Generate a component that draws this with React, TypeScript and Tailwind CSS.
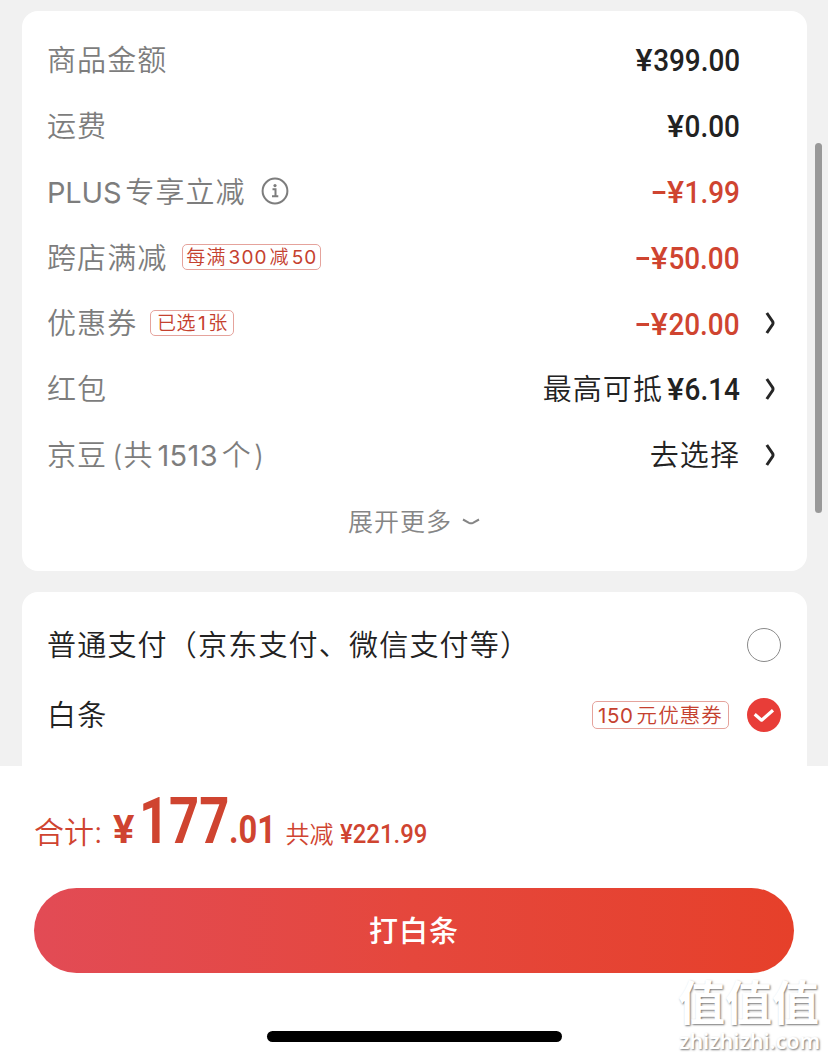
import type { ReactNode } from "react";

const CJK = "font-['Inter','Noto_Sans_CJK_SC',sans-serif]";

function Price({ amount, minus = false }: { amount: string; minus?: boolean }) {
  return (
    <span
      className={`flex origin-right scale-x-[0.9] items-baseline font-['Roboto',sans-serif] text-[31px] font-medium leading-none ${minus ? "text-[#cf4430]" : ""}`}
    >
      {minus && <span className="mr-[2px] h-[3px] w-[14px] self-center bg-[#cf4430]" />}
      <span className="mr-[3px] inline-block origin-left scale-x-[1.15]">¥</span>
      <span>{amount}</span>
    </span>
  );
}

function Chevron() {
  return (
    <svg viewBox="0 0 10 22" className="h-[22px] w-[10px]" fill="none" stroke="#262626" strokeWidth="3">
      <path d="M1.8 1 L7.6 9.5 Q8.4 11 7.6 12.5 L1.8 21" />
    </svg>
  );
}

function InfoIcon() {
  return (
    <svg viewBox="0 0 28 28" className="ml-[15px] size-7" fill="none" stroke="#7d7d7d" strokeWidth="2">
      <circle cx="14" cy="14" r="12.4" />
      <path d="M11.5 12.2h3v7M11 19.3h6.3" />
      <circle cx="14" cy="8.6" r="1.6" fill="#7d7d7d" stroke="none" />
    </svg>
  );
}

function Tag({ children, className }: { children: ReactNode; className: string }) {
  return (
    <span
      className={`flex items-center justify-center whitespace-nowrap rounded-[5px] border border-[#e5a39c] leading-none text-[#c5412f] ${className}`}
    >
      {children}
    </span>
  );
}

function Row({
  label,
  extra,
  value,
  arrow = false,
}: {
  label: ReactNode;
  extra?: ReactNode;
  value: ReactNode;
  arrow?: boolean;
}) {
  return (
    <div className="flex h-[65.8px] items-center">
      <span className="whitespace-nowrap pt-[2px] text-[29px] tracking-[1.1px] text-[#7d7d7d]">{label}</span>
      {extra}
      <span className="ml-auto flex items-center whitespace-nowrap pt-[2px] text-[#222]">{value}</span>
      <span className="flex w-[67px] justify-start pl-[25px]">{arrow && <Chevron />}</span>
    </div>
  );
}

export default function App() {
  return (
    <div className={`relative flex h-[1059px] w-[828px] flex-col overflow-hidden bg-[#f1f1f1] font-[350] ${CJK}`}>
      <main className="flex h-[766px] shrink-0 flex-col gap-[21px] overflow-hidden px-[22px] pt-[11px]">
        <section className="h-[560px] w-[785px] shrink-0 rounded-[16px] bg-white pl-[25px] pt-[16px]">
          <Row label="商品金额" value={<Price amount="399.00" />} />
          <Row label="运费" value={<Price amount="0.00" />} />
          <Row
            label={<><span className="mr-[4px] font-normal tracking-[-0.2px]">PLUS</span>专享立减</>}
            extra={<InfoIcon />}
            value={<Price minus amount="1.99" />}
          />
          <Row
            label="跨店满减"
            extra={<Tag className="ml-[15px] h-[26px] w-[139px] text-[19px] tracking-[1.1px]">每满<span className="mx-[2px] font-normal">300</span>减<span className="ml-[2px] font-normal">50</span></Tag>}
            value={<Price minus amount="50.00" />}
          />
          <Row
            label="优惠券"
            extra={<Tag className="ml-[13px] h-[26px] w-[84px] text-[19px] tracking-[0.5px]">已选<span className="mx-[2px] font-normal">1</span>张</Tag>}
            value={<Price minus amount="20.00" />}
            arrow
          />
          <Row
            label="红包"
            value={<><span className="-mr-[4px] text-[29px] tracking-[1.1px]">最高可抵</span><Price amount="6.14" /></>}
            arrow
          />
          <Row
            label={<>京豆<span className="ml-[5px]">(</span>共<span className="mx-[4px] font-normal tracking-[0.3px]">1513</span>个<span className="ml-[2px]">)</span></>}
            value={<span className="text-[29px] tracking-[1.1px]">去选择</span>}
            arrow
          />
          <div className="flex h-[66px] items-center pl-[301px] text-[25px] tracking-[1px] text-[#858585]">
            <span className="pt-[4px]">展开更多</span>
            <svg viewBox="0 0 18 8" className="ml-[10px] mt-[2px] h-2 w-[18px]" fill="none" stroke="#858585" strokeWidth="2">
              <path d="M1 1.5 L7 4.8 Q9 5.8 11 4.8 L17 1.5" />
            </svg>
          </div>
        </section>

        <section className="h-[200px] w-[785px] shrink-0 rounded-t-[16px] bg-white pl-[25px] pr-[26px] pt-[18px] text-[29px] tracking-[1.2px] text-[#222]">
          <div className="flex h-[70px] items-center justify-between">
            <span className="whitespace-nowrap pt-[2px]">普通支付（京东支付、微信支付等）</span>
            <span className="size-[34px] rounded-full border-[1.5px] border-[#8a8a8a]" />
          </div>
          <div className="flex h-[70px] items-center">
            <span className="pt-[2px]">白条</span>
            <Tag className="ml-auto h-[28px] w-[137px] border-[#c98078] pt-[2px] text-[20.5px] tracking-[1.1px]"><span className="mr-[3px] font-normal tracking-[0.6px]">150</span>元优惠券</Tag>
            <svg viewBox="0 0 34 34" className="ml-[18px] size-[34px]">
              <circle cx="17" cy="17" r="17" fill="#e83d38" />
              <path d="M7.7 16.2 L14.6 22.2 L26 12.2" fill="none" stroke="white" strokeWidth="3.2" strokeLinejoin="round" />
            </svg>
          </div>
        </section>
      </main>

      <footer className="flex flex-1 flex-col bg-white">
        <div className="flex h-[122px] items-baseline whitespace-nowrap pl-[34px] pt-[8px] text-[#cf4430]">
          <span className="text-[30px]">合计:</span>
          <span className="ml-[11px] flex w-[161px] items-baseline font-['Roboto',sans-serif] text-[38px] font-bold">
            <span className="inline-block w-[26px] shrink-0 origin-left scale-x-[1.05]">¥</span>
            <span className="inline-block w-[90px] shrink-0 origin-left scale-x-[0.82] text-[64px]">177</span>
            <span className="inline-block shrink-0 origin-left scale-x-[0.86]">.01</span>
          </span>
          <span className="ml-[11px] text-[24px]">共减</span>
          <span className="ml-[7px] inline-block origin-left scale-x-[0.92] font-['Roboto',sans-serif] text-[26px] font-medium">¥221.99</span>
        </div>
        <button className="ml-[34px] h-[85px] w-[760px] rounded-full bg-linear-to-r from-[#e24b55] via-[#e5473c] to-[#e6402a] pt-[2px] text-[29px] font-medium tracking-[1px] text-white">
          打白条
        </button>
        <div className="ml-[267px] mt-[58px] h-[11px] w-[295px] rounded-full bg-black" />
      </footer>

      <div className="absolute left-[815px] top-[143px] h-[370px] w-[7px] rounded-full bg-[#999]" />

      <div className="absolute left-[678px] top-[978px] flex flex-col whitespace-nowrap text-white [text-shadow:1px_1px_2px_#777]">
        <span className="h-[50px] text-[47px] font-bold leading-[50px]">值值值</span>
        <span className="ml-[1px] font-['Noto_Sans',sans-serif] text-[21.5px] font-semibold leading-[26px]">zhizhizhi.com</span>
      </div>
    </div>
  );
}
